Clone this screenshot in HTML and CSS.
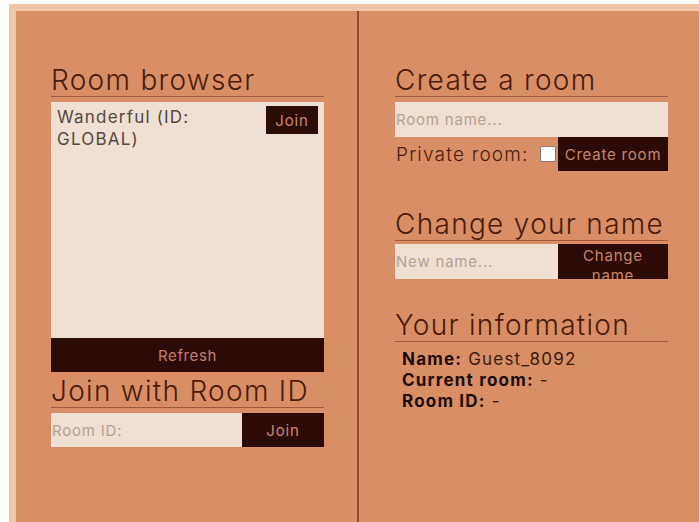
FILE: index.html
```html
<!DOCTYPE html>
<html lang="en">
<head>
<meta charset="utf-8">
<title>Lobby</title>
<link rel="stylesheet" href="styles.css">
</head>
<body>
<div class="frame">
  <main class="lobby">
    <section class="pane pane-left">
      <h2 class="title">Room browser</h2>
      <div class="room-list">
        <div class="room-item">
          <span class="room-name">Wanderful (ID: GLOBAL)</span>
          <button class="btn btn-join">Join</button>
        </div>
      </div>
      <button class="btn btn-refresh">Refresh</button>

      <h2 class="title title-join">Join with Room ID</h2>
      <div class="field-row row-join">
        <input class="field" type="text" placeholder="Room ID:">
        <button class="btn btn-join-id">Join</button>
      </div>
    </section>

    <section class="pane pane-right">
      <h2 class="title">Create a room</h2>
      <input class="field field-full" type="text" placeholder="Room name...">
      <div class="create-row">
        <label class="private-label">Private room:</label>
        <input class="check" type="checkbox">
        <button class="btn btn-create">Create room</button>
      </div>

      <h2 class="title title-name">Change your name</h2>
      <div class="field-row row-name">
        <input class="field" type="text" placeholder="New name...">
        <button class="btn btn-change"><span class="btn-change-text">Change<br>name</span></button>
      </div>

      <h2 class="title title-info">Your information</h2>
      <div class="info">
        <div><b>Name:</b> Guest_8092</div>
        <div><b>Current room:</b> -</div>
        <div><b>Room ID:</b> -</div>
      </div>
    </section>
  </main>
</div>
</body>
</html>
```

FILE: styles.css
```css
html, body {
  margin: 0;
  height: 100%;
}

body {
  background: #ffffff;
  font-family: Inter, "Open Sans", sans-serif;
  overflow: hidden;
}

.frame {
  margin: 4px 0 0 9px;
  padding: 7px 0 0 7px;
  background: #efc4a7;
  height: calc(100% - 4px);
  box-sizing: border-box;
}

.lobby {
  display: grid;
  grid-template-columns: 343px 1fr;
  height: 100%;
  background: #d98e65;
}

.pane {
  display: flex;
  flex-direction: column;
  padding-top: 53px;
  min-width: 0;
}

.pane-left {
  border-right: 2px solid #8e4f2c;
  padding-left: 35px;
  padding-right: 17px;
}

.pane-left > * {
  width: 273px;
}

.pane-right {
  padding-left: 36px;
}

.pane-right > * {
  width: 273px;
}

.title {
  margin: 0;
  height: 32px;
  line-height: 32px;
  font-size: 28px;
  font-weight: 300;
  color: #4a1b0d;
  border-bottom: 1px solid #a2593a;
  white-space: nowrap;
  letter-spacing: 1.3px;
}

.btn {
  border: 0;
  margin: 0;
  padding: 0;
  background: #2c0b07;
  color: #c9876b;
  font-family: inherit;
  font-size: 15px;
  font-weight: 400;
  letter-spacing: 0.8px;
  cursor: pointer;
}

.room-list {
  margin-top: 5px;
  height: 236px;
  background: #efe0d3;
  box-sizing: border-box;
  padding: 4px 6px 0 6px;
}

.room-item {
  display: flex;
  justify-content: space-between;
  align-items: flex-start;
}

.room-name {
  width: 195px;
  font-size: 17px;
  line-height: 22px;
  letter-spacing: 1.2px;
  color: #564640;
}

.btn-join {
  width: 52px;
  height: 28px;
}

.btn-refresh {
  height: 34px;
  color: #c0806a;
  letter-spacing: 0.6px;
}

.title-join {
  margin-top: 3px;
}

.field-row {
  display: flex;
  margin-top: 5px;
}

.field {
  border: 0;
  margin: 0;
  padding: 0 0 0 1px;
  outline: none;
  background: #efe0d3;
  font-family: inherit;
  font-size: 15px;
  letter-spacing: 0.8px;
  color: #4a3a32;
  min-width: 0;
  box-sizing: border-box;
}

.field::placeholder {
  color: #b5a193;
}

.row-join .field {
  width: 191px;
  height: 34px;
}

.btn-join-id {
  flex: 1;
  height: 34px;
}

.field-full {
  margin-top: 5px;
  height: 35px;
}

.create-row {
  display: flex;
  align-items: center;
  height: 34px;
}

.private-label {
  font-size: 19px;
  color: #4a1b0d;
  font-weight: 300;
  padding-left: 1px;
  letter-spacing: 1.2px;
  white-space: nowrap;
}

.check {
  appearance: none;
  flex: none;
  width: 16px;
  height: 16px;
  margin: 0 2px 0 auto;
  background: #ffffff;
  border: 1px solid #8a7a76;
  border-radius: 2px;
  box-sizing: border-box;
}

.btn-create {
  flex: none;
  width: 110px;
  height: 34px;
}

.title-name {
  margin-top: 37px;
}

.row-name {
  margin-top: 3px;
}

.row-name .field {
  width: 163px;
  height: 35px;
}

/* two-line label that runs past the bottom edge of the button */
.btn-change {
  width: 110px;
  height: 35px;
  overflow: hidden;
  display: flex;
  align-items: flex-start;
  justify-content: center;
}

.btn-change-text {
  display: block;
  padding-top: 2px;
  line-height: 20px;
}

.title-info {
  margin-top: 30px;
}

.info {
  margin-top: 7px;
  padding-left: 7px;
  font-size: 17px;
  line-height: 21px;
  letter-spacing: 1.2px;
  color: #3a1a10;
}

.info b {
  color: #1a0905;
  font-weight: 700;
}
```
